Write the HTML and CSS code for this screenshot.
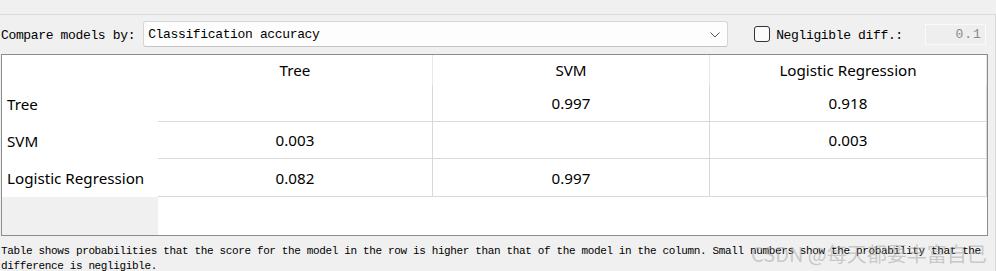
FILE: index.html
```html
<!DOCTYPE html>
<html lang="en">
<head>
    <meta charset="UTF-8">
    <title>Model comparison</title>
    <link rel="stylesheet" href="styles.css">
</head>
<body>
    <div class="top-strip"></div>
    <div class="panel">
        <div class="controls">
            <span class="mono-label">Compare models by:</span>
            <div class="combo">
                <span>Classification accuracy</span>
                <svg class="chevron" width="10" height="6" viewBox="0 0 10 6">
                    <path d="M0.5 0.5 L5 5 L9.5 0.5" fill="none" stroke="#555" stroke-width="1"/>
                </svg>
            </div>
            <span class="checkbox"></span>
            <span class="mono-label check-label">Negligible diff.:</span>
            <div class="spin">0.1</div>
        </div>

        <div class="table">
            <div class="corner"></div>
            <div class="col-head">Tree</div>
            <div class="col-head">SVM</div>
            <div class="col-head last">Logistic Regression</div>

            <div class="row-head">Tree</div>
            <div class="cell"></div>
            <div class="cell">0.997</div>
            <div class="cell">0.918</div>

            <div class="row-head">SVM</div>
            <div class="cell">0.003</div>
            <div class="cell"></div>
            <div class="cell">0.003</div>

            <div class="row-head">Logistic Regression</div>
            <div class="cell">0.082</div>
            <div class="cell">0.997</div>
            <div class="cell"></div>

            <div class="row-head empty"></div>
            <div class="filler"></div>
        </div>

        <p class="note">Table shows probabilities that the score for the model in the row is higher than that of the model in the column. Small numbers show the probability that the difference is negligible.</p>
    </div>
    <div class="watermark">CSDN @每天都要丰富自己</div>
</body>
</html>
```

FILE: styles.css
```css
/* base */
body {
    margin: 0;
    width: 996px;
    height: 271px;
    overflow: hidden;
    background-color: #f0f0f0;
    font-family: "Noto Sans", "Open Sans", sans-serif;
    color: #000;
    position: relative;
}

.top-strip {
    height: 14px;
}

.panel {
    border-top: 1px solid #dadada;
    border-right: 1px solid #dadada;
    height: 256px;
}

/* controls row */
.controls {
    display: flex;
    align-items: center;
    height: 26px;
    margin-top: 6px;
}

.mono-label {
    font-family: "Liberation Mono", monospace;
    font-size: 13px;
    letter-spacing: -0.35px;
    padding-left: 1px;
    padding-top: 2px;
    white-space: nowrap;
}

.combo {
    display: flex;
    align-items: center;
    justify-content: space-between;
    box-sizing: border-box;
    width: 585px;
    height: 26px;
    margin-left: 8px;
    padding: 1px 6px 0 4px;
    background-color: #fdfdfd;
    border: 1px solid #d6d6d6;
    border-bottom-color: #c4c4c4;
    border-radius: 3px;
    font-family: "Liberation Mono", monospace;
    font-size: 13px;
    letter-spacing: -0.35px;
}

.chevron {
    margin-right: 1px;
}

.checkbox {
    box-sizing: border-box;
    width: 16px;
    height: 16px;
    margin-left: 26px;
    border: 1px solid #333;
    border-radius: 3px;
    background-color: #fbfbfb;
}

.check-label {
    margin-left: 5px;
}

.spin {
    box-sizing: border-box;
    width: 61px;
    height: 21px;
    margin-left: 22px;
    padding-right: 3px;
    border: 1px solid #fafafa;
    background-color: #eeeeee;
    text-align: right;
    line-height: 20px;
    font-family: "Liberation Mono", monospace;
    font-size: 13px;
    letter-spacing: 1px;
    color: #8a8a8a;
}

/* comparison table */
.table {
    display: grid;
    grid-template-columns: 156px 275px 277px 277px;
    grid-template-rows: 30px 37px 37px 38px 38px;
    width: 985px;
    margin: 7px 0 0 1px;
    border: 1px solid #8c8c8c;
    background-color: #fff;
    font-size: 15.2px;
}

.corner {
    background-color: #fff;
}

.col-head {
    display: flex;
    align-items: center;
    justify-content: center;
    border-right: 1px solid #e8e8e8;
}

.row-head {
    display: flex;
    align-items: center;
    padding-left: 5px;
    white-space: nowrap;
}

.row-head.empty {
    background-color: #f0f0f0;
}

.cell {
    display: flex;
    align-items: center;
    justify-content: center;
    border-right: 1px solid #d9d9d9;
    border-bottom: 1px solid #d9d9d9;
}

.filler {
    grid-column: 2 / 5;
    background-color: #fff;
}

.note {
    margin: 8px 0 0 1px;
    font-family: "Liberation Mono", monospace;
    font-size: 11px;
    letter-spacing: -0.36px;
    line-height: 15px;
    width: 990px;
}

/* watermark over the note */
.watermark {
    position: absolute;
    left: 751px;
    top: 239px;
    font-family: "Noto Sans CJK SC", sans-serif;
    font-size: 20px;
    color: rgba(160, 160, 160, 0.5);
    white-space: nowrap;
}
```
